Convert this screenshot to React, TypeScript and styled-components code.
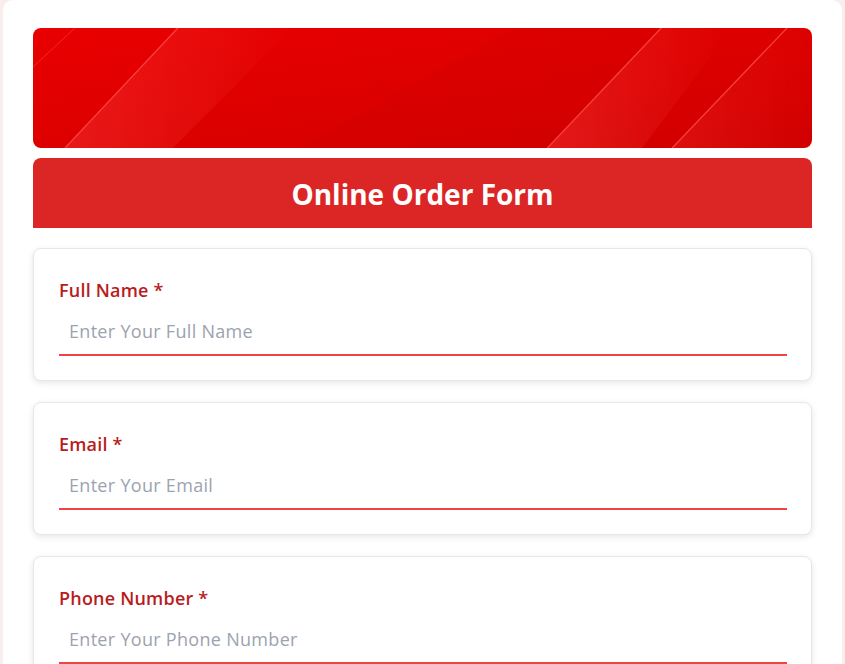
import React from "react";
import styled, { createGlobalStyle } from "styled-components";

const GlobalStyle = createGlobalStyle`
  html, body {
    margin: 0;
    padding: 0;
    background: #f9eded;
    font-family: "Open Sans", "Noto Sans", Arial, sans-serif;
  }
  * { box-sizing: border-box; }
`;

const Page = styled.div`
  max-width: 839px;
  margin: 0 auto;
  background: #ffffff;
  border-radius: 10px;
  padding: 28px 30px 30px;
  min-height: 664px;
`;

const Banner = styled.div`
  height: 120px;
  border-radius: 8px;
  overflow: hidden;
  margin-bottom: 10px;
  svg { display: block; width: 100%; height: 100%; }
`;

const TitleBar = styled.div`
  height: 70px;
  background: #dc2626;
  border-radius: 8px 8px 0 0;
  display: flex;
  align-items: center;
  justify-content: center;
  margin-bottom: 20px;
`;

const Title = styled.h1`
  margin: 0;
  padding-top: 2px;
  color: #ffffff;
  font-size: 28px;
  font-weight: 700;
`;

const Card = styled.div`
  background: #ffffff;
  border: 1px solid #e5e7eb;
  border-radius: 8px;
  box-shadow: 0 2px 6px rgba(0, 0, 0, 0.1);
  padding: 28px 24px 24px 25px;
  margin-bottom: 21px;
`;

const Label = styled.label`
  display: block;
  color: #b91c1c;
  font-size: 18px;
  font-weight: 600;
  letter-spacing: 0.2px;
  line-height: 27px;
  margin-bottom: 4px;
`;

const Input = styled.input`
  display: block;
  width: 100%;
  border: none;
  border-bottom: 2px solid #ef4444;
  outline: none;
  padding: 12px 10px;
  font-family: inherit;
  font-size: 18px;
  letter-spacing: 0.3px;
  line-height: 22px;
  color: #111827;
  background: transparent;
  &::placeholder { color: #9ca3af; }
`;

const BannerArt = () => (
  <svg viewBox="0 0 780 120" preserveAspectRatio="none">
    <defs>
      <linearGradient id="base" x1="0" y1="0" x2="1" y2="1">
        <stop offset="0" stopColor="#e90000" />
        <stop offset="0.55" stopColor="#dc0000" />
        <stop offset="1" stopColor="#d00000" />
      </linearGradient>
      <linearGradient id="glow" x1="0" y1="0" x2="1" y2="0">
        <stop offset="0" stopColor="#ff4a4a" stopOpacity="0.35" />
        <stop offset="1" stopColor="#ff4a4a" stopOpacity="0" />
      </linearGradient>
    </defs>
    <rect width="780" height="120" fill="url(#base)" />
    <polygon points="145,0 260,0 140,120 32,120" fill="url(#glow)" />
    <polygon points="266,120 482,0 629,0 515,120" fill="#b00000" opacity="0.08" />
    <polygon points="629,0 700,0 610,120 515,120" fill="url(#glow)" />
    <polygon points="755,0 780,0 780,120 640,120" fill="url(#glow)" opacity="0.6" />
    <line x1="32" y1="120" x2="145" y2="0" stroke="#ff4d4d" strokeWidth="1.3" opacity="0.8" />
    <line x1="515" y1="120" x2="629" y2="0" stroke="#ff4d4d" strokeWidth="1.3" opacity="0.8" />
    <line x1="640" y1="120" x2="755" y2="0" stroke="#ff4d4d" strokeWidth="1.3" opacity="0.8" />
    <line x1="0" y1="39" x2="42" y2="0" stroke="#ff4d4d" strokeWidth="1" opacity="0.5" />
  </svg>
);

const fields = [
  { label: "Full Name *", placeholder: "Enter Your Full Name", type: "text" },
  { label: "Email *", placeholder: "Enter Your Email", type: "email" },
  { label: "Phone Number *", placeholder: "Enter Your Phone Number", type: "tel" },
];

export default function App() {
  return (
    <>
      <GlobalStyle />
      <Page>
        <Banner>
          <BannerArt />
        </Banner>
        <TitleBar>
          <Title>Online Order Form</Title>
        </TitleBar>
        {fields.map((f) => (
          <Card key={f.label}>
            <Label>{f.label}</Label>
            <Input type={f.type} placeholder={f.placeholder} />
          </Card>
        ))}
      </Page>
    </>
  );
}
